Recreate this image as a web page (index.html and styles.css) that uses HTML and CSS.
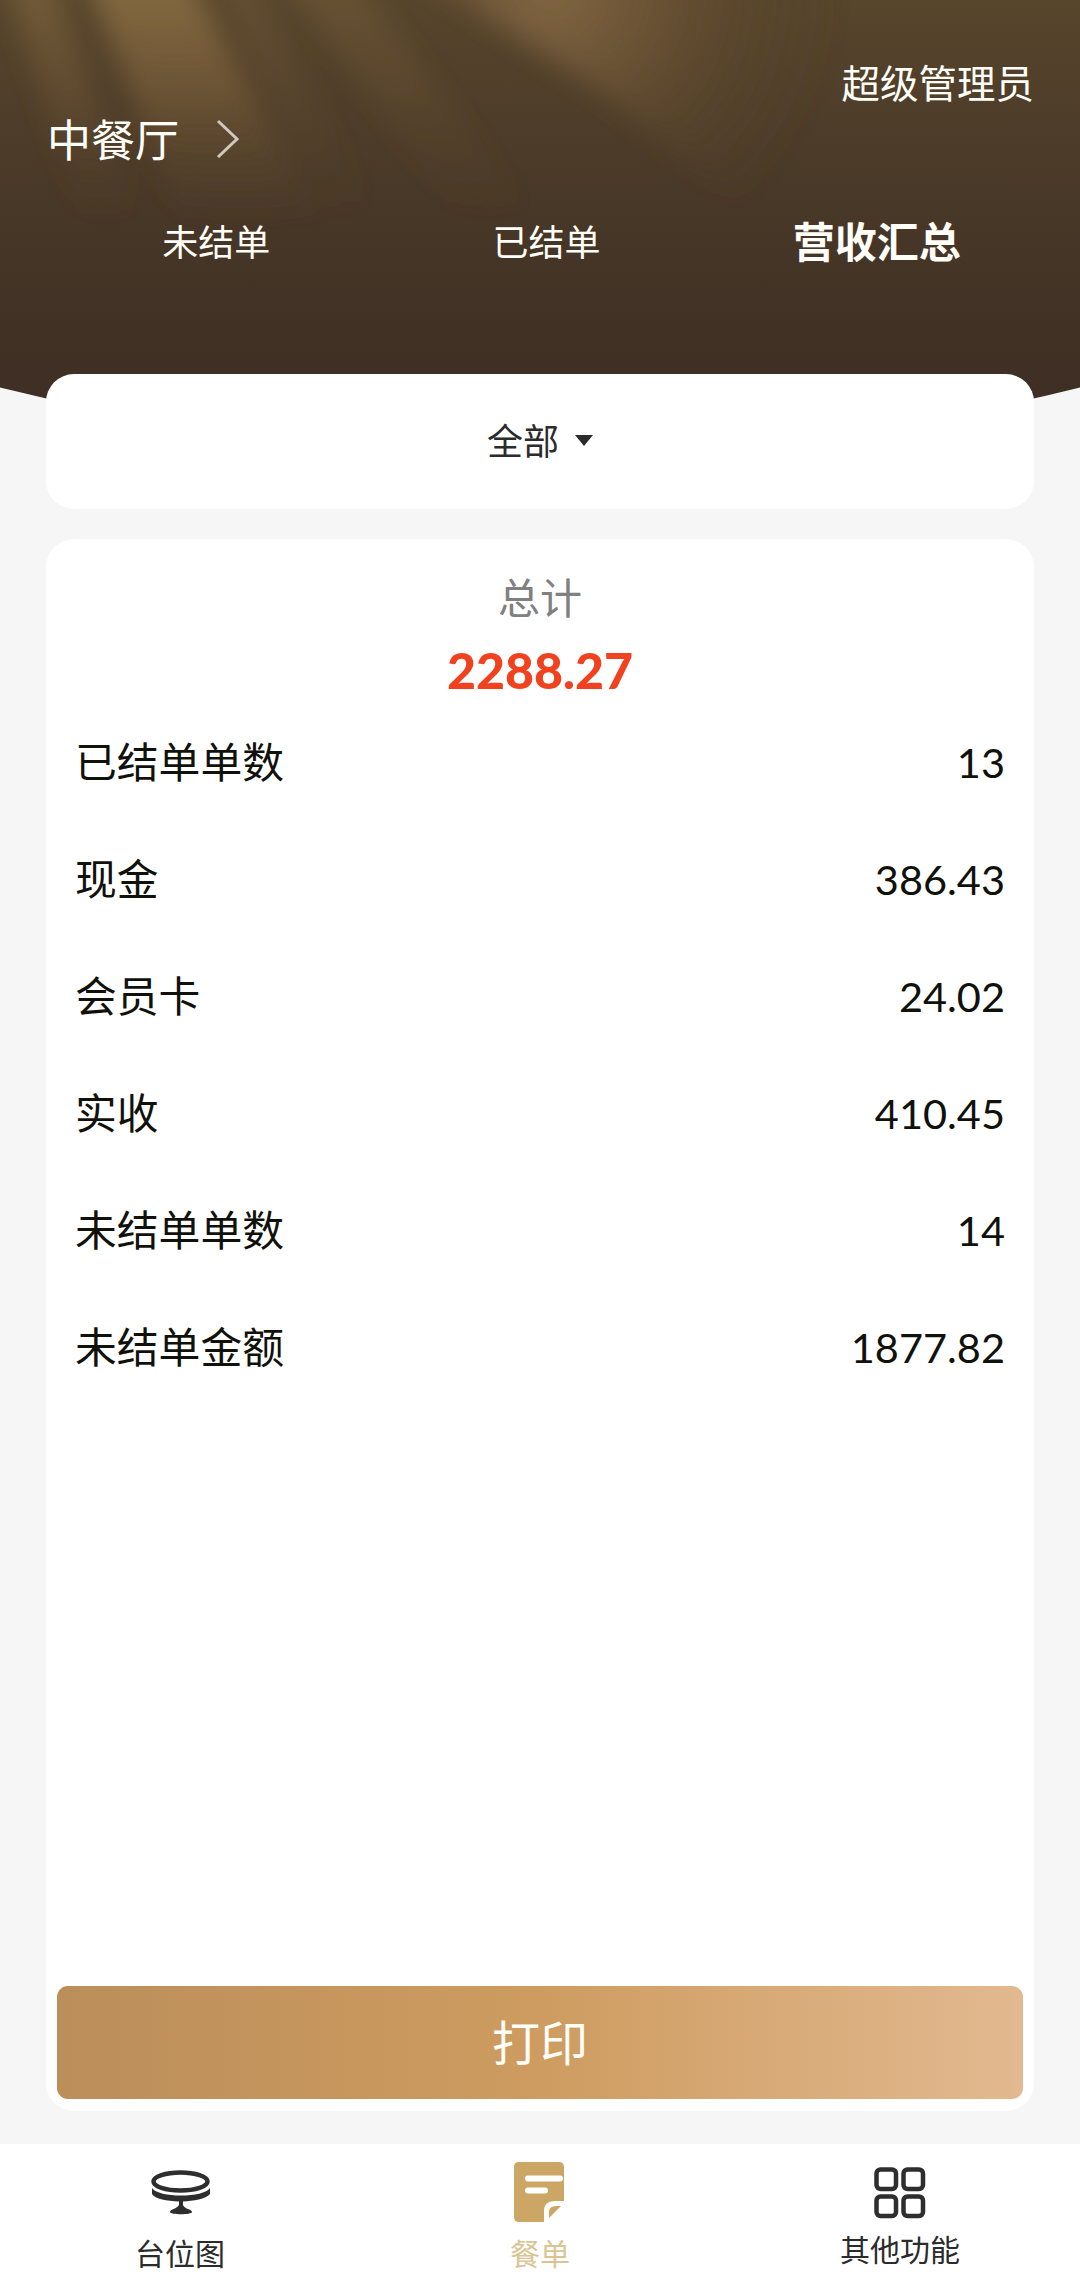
FILE: index.html
```html
<!DOCTYPE html>
<html lang="zh-CN">
<head>
    <meta charset="UTF-8">
    <meta name="viewport" content="width=device-width, initial-scale=1.0">
    <title>营收汇总</title>
    <link rel="stylesheet" href="styles.css">
</head>
<body>

<div class="page">

    <svg class="header-bg" viewBox="0 0 1080 460" preserveAspectRatio="none">
        <defs>
            <linearGradient id="base" x1="0" y1="0" x2="0" y2="1">
                <stop offset="0" stop-color="#57452c"/>
                <stop offset="0.3" stop-color="#4d3c29"/>
                <stop offset="0.6" stop-color="#443426"/>
                <stop offset="0.82" stop-color="#3f2f24"/>
                <stop offset="1" stop-color="#3e2d22"/>
            </linearGradient>
            <linearGradient id="ray" gradientUnits="userSpaceOnUse" x1="0" y1="0" x2="0" y2="220">
                <stop offset="0" stop-color="#82683f"/>
                <stop offset="0.4" stop-color="#735938" stop-opacity="0.8"/>
                <stop offset="1" stop-color="#5c482b" stop-opacity="0"/>
            </linearGradient>
            <radialGradient id="glow" gradientUnits="userSpaceOnUse" cx="550" cy="-10" r="290">
                <stop offset="0" stop-color="#816743"/>
                <stop offset="0.35" stop-color="#705637" stop-opacity="0.8"/>
                <stop offset="0.65" stop-color="#5f4a2e" stop-opacity="0.45"/>
                <stop offset="1" stop-color="#54422b" stop-opacity="0"/>
            </radialGradient>
            <filter id="soft" x="-20%" y="-20%" width="140%" height="140%">
                <feGaussianBlur stdDeviation="13"/>
            </filter>
        </defs>
        <rect width="1080" height="460" fill="url(#base)"/>
        <g filter="url(#soft)">
            <polygon points="0,-40 45,-40 140,220 80,220" fill="url(#ray)" opacity="0.6"/>
            <polygon points="80,-40 180,-40 320,220 180,220" fill="url(#ray)"/>
            <polygon points="210,-40 240,-40 380,220 320,220" fill="url(#ray)" opacity="0.3"/>
            <polygon points="270,-40 340,-40 540,220 460,220" fill="url(#ray)" opacity="0.35"/>
            <polygon points="380,-50 900,-50 900,240 760,220 600,90" fill="url(#glow)"/>
        </g>
    </svg>

    <div class="header">
        <div class="user">超级管理员</div>
        <div class="hall">
            <span>中餐厅</span>
            <svg class="arrow" width="26" height="40" viewBox="0 0 26 40">
                <path d="M4 3 L23 21 L4 39" fill="none" stroke="#cfc8c0" stroke-width="3"/>
            </svg>
        </div>
        <div class="tabs">
            <div class="tab">未结单</div>
            <div class="tab">已结单</div>
            <div class="tab active">营收汇总</div>
        </div>
    </div>

    <div class="card filter">
        <span>全部</span>
        <span class="caret"></span>
    </div>

    <div class="card summary">
        <div class="total-label">总计</div>
        <div class="total">2288.27</div>

        <div class="row"><span>已结单单数</span><span class="num">13</span></div>
        <div class="row"><span>现金</span><span class="num">386.43</span></div>
        <div class="row"><span>会员卡</span><span class="num">24.02</span></div>
        <div class="row"><span>实收</span><span class="num">410.45</span></div>
        <div class="row"><span>未结单单数</span><span class="num">14</span></div>
        <div class="row"><span>未结单金额</span><span class="num">1877.82</span></div>

        <button class="print" type="button">打印</button>
    </div>

    <div class="nav">
        <div class="nav-item">
            <svg width="60" height="64" viewBox="0 0 60 64">
                <ellipse cx="30.500" cy="21.500" rx="27" ry="9" fill="none" stroke="#2e2e2e" stroke-width="4.500"/>
                <path d="M2 28 C8 38 54 38 60 28 V34 C56 39 43 41 33 41.500 V45 C34 49 42 49 42 52 C42 55 20 55 20 52 C20 49 27 49 29 45 V41.500 C17 41 5 39 2 34 Z" fill="#2e2e2e"/>
            </svg>
            <span>台位图</span>
        </div>
        <div class="nav-item current">
            <svg width="60" height="64" viewBox="0 0 60 64">
                <path d="M9 2 H49 Q54 2 54 7 V41 H45 Q34 41 34 51 V62 H9 Q4 62 4 57 V7 Q4 2 9 2 Z" fill="#cca665"/>
                <path d="M51 46 H46 Q39 46 39 52 V58 Z" fill="#cca665"/>
                <path d="M18 18.500 H50 M18 30.500 H35" fill="none" stroke="#fff" stroke-width="6" stroke-linecap="round"/>
            </svg>
            <span>餐单</span>
        </div>
        <div class="nav-item other">
            <svg width="60" height="64" viewBox="0 0 60 64">
                <g fill="none" stroke="#2e2e2e" stroke-width="4.500">
                    <rect x="6.500" y="9.500" width="19.500" height="19.500" rx="4"/>
                    <rect x="33.500" y="9.500" width="19.500" height="19.500" rx="4"/>
                    <rect x="6.500" y="36.500" width="19.500" height="19.500" rx="4"/>
                    <rect x="33.500" y="36.500" width="19.500" height="19.500" rx="4"/>
                </g>
            </svg>
            <span>其他功能</span>
        </div>
    </div>

</div>

</body>
</html>
```

FILE: styles.css
```css
* {
    box-sizing: border-box;
}

body {
    margin: 0;
    background: #f6f6f6;
    font-family: "Noto Sans CJK SC", sans-serif;
    color: #11110c;
}

.page {
    position: relative;
    display: flex;
    flex-direction: column;
    width: 1080px;
    height: 2293px;
    overflow: hidden;
}

/* curved background behind the header */
.header-bg {
    position: absolute;
    top: 0;
    left: 0;
    width: 1080px;
    height: 460px;
    clip-path: circle(2226px at 540px -1772px);
}

.header {
    position: relative;
    height: 374px;
    padding: 61px 46px 0 47px;
    color: #fffef8;
}

.user {
    font-size: 38.5px;
    line-height: 40px;
    text-align: right;
}

.hall {
    display: flex;
    align-items: center;
    gap: 35px;
    margin-top: 12px;
    font-size: 44px;
    line-height: 50px;
}

.arrow {
    display: block;
}

.tabs {
    display: flex;
    margin: 47px -8px 0 4px;
    line-height: 60px;
}

.tab {
    flex: 1;
    font-size: 36px;
    text-align: center;
}

.tab.active {
    font-size: 42px;
    font-weight: bold;
}

.card {
    position: relative;
    margin: 0 46px;
    background: #fff;
    border-radius: 28px;
}

.filter {
    display: flex;
    align-items: center;
    justify-content: center;
    gap: 16px;
    height: 135px;
    padding-bottom: 5px;
    font-size: 36px;
    line-height: 50px;
    color: #2b2b2b;
}

.caret {
    border-left: 9px solid transparent;
    border-right: 9px solid transparent;
    border-top: 11px solid #2b2b2b;
    margin-top: 2px;
}

.summary {
    display: flex;
    flex-direction: column;
    height: 1572px;
    margin-top: 30px;
    padding: 28px 11px 12px;
}

.total-label {
    font-size: 42px;
    line-height: 58px;
    text-align: center;
    color: #808080;
}

.total {
    margin-bottom: -12px;
    padding-top: 2px;
    font-family: Lato, "Noto Sans CJK SC", sans-serif;
    font-size: 50px;
    font-weight: 900;
    line-height: 86px;
    text-align: center;
    color: #f0421f;
}

.row {
    display: flex;
    align-items: center;
    justify-content: space-between;
    height: 117px;
    padding: 0 18px;
    font-size: 41.8px;
    line-height: 60px;
}

.num {
    padding-top: 4px;
    font-family: Lato, "Noto Sans CJK SC", sans-serif;
    font-size: 41.5px;
}

.print {
    height: 113px;
    margin-top: auto;
    padding: 0 0 5px;
    border: none;
    border-radius: 11px;
    background: linear-gradient(to right, #bb8e5a, #ce9c60 50%, #e2b990);
    font-family: inherit;
    font-size: 48px;
    line-height: 60px;
    color: #fffef8;
}

.nav {
    display: flex;
    height: 149px;
    margin-top: auto;
    padding-top: 16px;
    background: #fff;
}

.nav-item {
    flex: 1;
    display: flex;
    flex-direction: column;
    align-items: center;
    font-size: 30px;
    line-height: 40px;
    color: #2b2b2b;
}

.nav-item svg {
    display: block;
    margin-bottom: 8px;
}

.nav-item.current {
    color: #d9c594;
}

.nav-item.other svg {
    margin-bottom: 4px;
}
```
